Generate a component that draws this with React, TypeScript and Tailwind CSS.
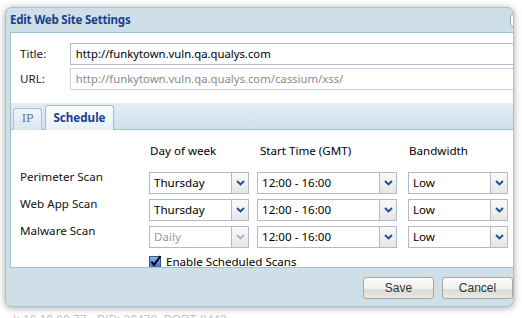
import React from "react";

function Chevron({ disabled }: { disabled?: boolean }) {
  return (
    <svg width="9" height="6" viewBox="0 0 9 6">
      <path d="M1 1 L4.5 4.5 L8 1" fill="none" stroke={disabled ? "#9fb3cf" : "#1f4b8f"} strokeWidth="1.8" />
    </svg>
  );
}

function Combo({ value, w, disabled }: { value: string; w: string; disabled?: boolean }) {
  return (
    <div className={`${w} h-[22px] flex border border-[#b5b8c8] bg-white`}>
      <div className={`flex-1 flex items-center pl-[4px] text-[11.6px] ${disabled ? "text-[#9a9a9a]" : "text-black"}`}>{value}</div>
      <div className="w-[17px] flex items-center justify-center border-l border-[#b5b8c8] bg-gradient-to-b from-[#fafafa] to-[#e6e6e6]">
        <Chevron disabled={disabled} />
      </div>
    </div>
  );
}

function Btn({ label }: { label: string }) {
  return (
    <div className="w-[74px] h-[22px] rounded-[3px] border border-[#a7a7a7] bg-[linear-gradient(#fbfbf9_0%,#f2f2ee_55%,#dcdcd6_58%,#e9e9e4_100%)] flex items-center justify-center font-['Liberation_Sans'] text-[12px] text-[#333]">
      {label}
    </div>
  );
}

export default function App() {
  return (
    <div className="w-[522px] h-[318px] bg-white overflow-hidden font-['Noto_Sans',sans-serif] relative">
      <div className="ml-[5px] mt-[7px] w-[509px] h-[300px] rounded-[7px] bg-[#cfdfe8] border border-[#a9c2d0] shadow-[0_1px_7px_rgba(0,0,0,0.35)] flex flex-col overflow-hidden relative z-10">
        {/* header */}
        <div className="h-[24px] flex items-center pl-[4px] relative shrink-0">
          <span className="font-bold text-[11.5px] text-[#15428b] tracking-[-0.2px]">Edit Web Site Settings</span>
          <div className="absolute right-[-6px] top-[6px] w-[9px] h-[13px] rounded-[3px] border border-[#8fb0c8] bg-white" />
        </div>
        {/* body */}
        <div className="ml-[4px] w-[520px] h-[236px] border border-[#a3bfce] bg-white flex flex-col overflow-hidden shrink-0">
          <div className="pt-[10px] pl-[9px] flex flex-col gap-[3px]">
            <div className="flex items-center h-[22px]">
              <div className="w-[51px] text-[11.6px] text-[#222]">Title:</div>
              <div className="w-[470px] h-[22px] border border-[#b5b8c8] flex items-center pl-[5px] text-[11.3px] text-black">http://funkytown.vuln.qa.qualys.com</div>
            </div>
            <div className="flex items-center h-[22px]">
              <div className="w-[51px] text-[11.6px] text-[#222]">URL:</div>
              <div className="w-[470px] h-[22px] border border-[#d0d3dc] flex items-center pl-[5px] text-[11.3px] text-[#8a8a8a]">http://funkytown.vuln.qa.qualys.com/cassium/xss/</div>
            </div>
          </div>
          {/* tab strip */}
          <div className="mt-[13px] h-[27px] bg-gradient-to-b from-[#e2edf6] to-[#cfe0ef] border-b border-[#99bbe8] flex items-end pl-[2px] gap-[3px] shrink-0">
            <div className="w-[29px] h-[22px] rounded-t-[3px] border border-b-0 border-[#a9c3dc] bg-gradient-to-b from-[#f0f5fa] to-[#d9e6f2] flex items-center justify-center text-[11px] text-[#5b6f8a] font-['DejaVu_Serif'] -mb-[1px]">IP</div>
            <div className="w-[69px] h-[25px] rounded-t-[3px] border border-b-0 border-[#99bbe8] bg-gradient-to-b from-[#ffffff] to-[#e7f0f9] flex items-center justify-center text-[11.6px] font-bold text-[#15428b] -mb-[1px]">Schedule</div>
          </div>
          {/* tab content */}
          <div className="pt-[12px] pl-[9px] text-[11.6px] text-black">
            <div className="grid grid-cols-[129px_108px_151px_100px] h-[17px] items-center">
              <div />
              <div className="pl-[1px]">Day of week</div>
              <div className="pl-[3px]">Start Time (GMT)</div>
              <div className="pl-[1px]">Bandwidth</div>
            </div>
            <div className="mt-[13px] flex flex-col gap-[5px]">
              {[
                ["Perimeter Scan", "Thursday", false],
                ["Web App Scan", "Thursday", false],
                ["Malware Scan", "Daily", true],
              ].map(([label, day, dis]) => (
                <div key={label as string} className="grid grid-cols-[129px_108px_151px_100px] items-start">
                  <div className="-mt-[3px] leading-[16px] text-[#111]">{label as string}</div>
                  <Combo value={day as string} w="w-[100px]" disabled={dis as boolean} />
                  <Combo value="12:00 - 16:00" w="w-[140px]" />
                  <Combo value="Low" w="w-[100px]" />
                </div>
              ))}
            </div>
            <div className="mt-[7px] ml-[129px] flex items-center gap-[3px] h-[14px]">
              <svg width="14" height="14" viewBox="0 0 14 14">
                <defs>
                  <linearGradient id="cb" x1="0" y1="0" x2="0" y2="1">
                    <stop offset="0" stopColor="#8fb6e6" />
                    <stop offset="1" stopColor="#3f78c4" />
                  </linearGradient>
                </defs>
                <rect x="0.5" y="1.5" width="11" height="11" fill="url(#cb)" stroke="#2d5a94" />
                <path d="M2.5 6.5 L5 10 L11.5 1" fill="none" stroke="#000" strokeWidth="2" />
              </svg>
              <span className="leading-[16px]">Enable Scheduled Scans</span>
            </div>
          </div>
        </div>
        {/* footer */}
        <div className="flex-1 flex items-start pt-[9px] pl-[357px] gap-[8px]">
          <Btn label="Save" />
          <Btn label="Cancel" />
        </div>
      </div>
      <div className="mt-[4px] ml-[13px] text-[12px] text-[#c4c4c4] font-['Liberation_Sans'] whitespace-nowrap">I: 10.10.80.77 - PID: 30478, PORT 8443</div>
    </div>
  );
}
